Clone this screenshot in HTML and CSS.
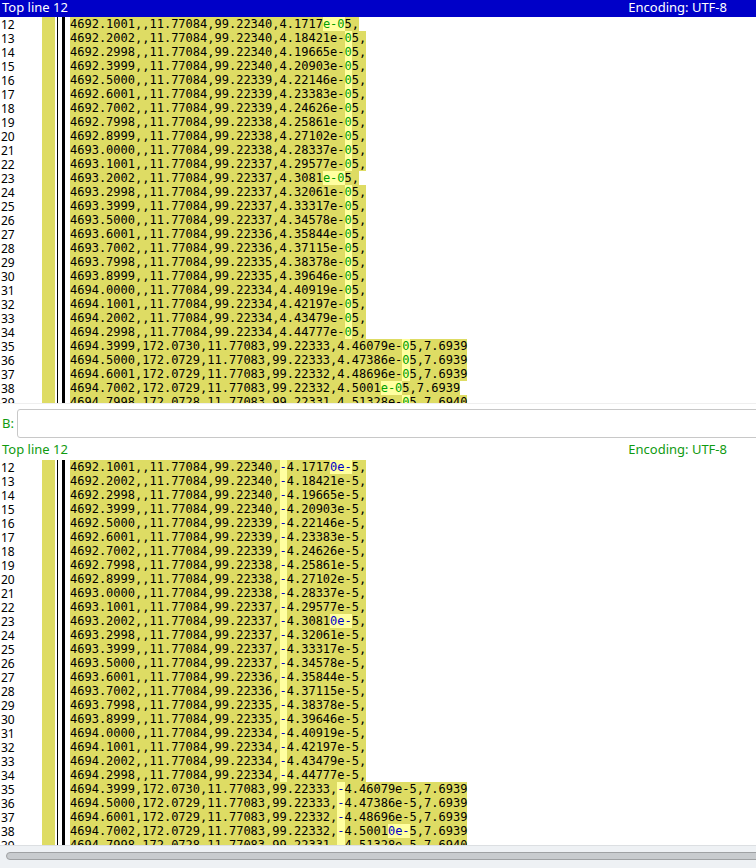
FILE: index.html
```html
<!DOCTYPE html>
<html lang="en">
<head>
<meta charset="utf-8">
<title>Diff</title>
<link rel="stylesheet" href="styles.css">
</head>
<body>
<div class="app">
  <section class="pane pane-a">
    <header class="head head-active"><span>Top line 12</span><span>Encoding: UTF-8</span></header>
    <div class="rows">
      <div class="row"><span class="num">12</span><span class="mark"></span><span class="bars"></span><code class="line">4692.1001,,11.77084,99.22340,4.1717<b class="ha">e-0</b>5,</code></div>
      <div class="row"><span class="num">13</span><span class="mark"></span><span class="bars"></span><code class="line">4692.2002,,11.77084,99.22340,4.18421e-<b class="ha">0</b>5,</code></div>
      <div class="row"><span class="num">14</span><span class="mark"></span><span class="bars"></span><code class="line">4692.2998,,11.77084,99.22340,4.19665e-<b class="ha">0</b>5,</code></div>
      <div class="row"><span class="num">15</span><span class="mark"></span><span class="bars"></span><code class="line">4692.3999,,11.77084,99.22340,4.20903e-<b class="ha">0</b>5,</code></div>
      <div class="row"><span class="num">16</span><span class="mark"></span><span class="bars"></span><code class="line">4692.5000,,11.77084,99.22339,4.22146e-<b class="ha">0</b>5,</code></div>
      <div class="row"><span class="num">17</span><span class="mark"></span><span class="bars"></span><code class="line">4692.6001,,11.77084,99.22339,4.23383e-<b class="ha">0</b>5,</code></div>
      <div class="row"><span class="num">18</span><span class="mark"></span><span class="bars"></span><code class="line">4692.7002,,11.77084,99.22339,4.24626e-<b class="ha">0</b>5,</code></div>
      <div class="row"><span class="num">19</span><span class="mark"></span><span class="bars"></span><code class="line">4692.7998,,11.77084,99.22338,4.25861e-<b class="ha">0</b>5,</code></div>
      <div class="row"><span class="num">20</span><span class="mark"></span><span class="bars"></span><code class="line">4692.8999,,11.77084,99.22338,4.27102e-<b class="ha">0</b>5,</code></div>
      <div class="row"><span class="num">21</span><span class="mark"></span><span class="bars"></span><code class="line">4693.0000,,11.77084,99.22338,4.28337e-<b class="ha">0</b>5,</code></div>
      <div class="row"><span class="num">22</span><span class="mark"></span><span class="bars"></span><code class="line">4693.1001,,11.77084,99.22337,4.29577e-<b class="ha">0</b>5,</code></div>
      <div class="row"><span class="num">23</span><span class="mark"></span><span class="bars"></span><code class="line">4693.2002,,11.77084,99.22337,4.3081<b class="ha">e-0</b>5,</code></div>
      <div class="row"><span class="num">24</span><span class="mark"></span><span class="bars"></span><code class="line">4693.2998,,11.77084,99.22337,4.32061e-<b class="ha">0</b>5,</code></div>
      <div class="row"><span class="num">25</span><span class="mark"></span><span class="bars"></span><code class="line">4693.3999,,11.77084,99.22337,4.33317e-<b class="ha">0</b>5,</code></div>
      <div class="row"><span class="num">26</span><span class="mark"></span><span class="bars"></span><code class="line">4693.5000,,11.77084,99.22337,4.34578e-<b class="ha">0</b>5,</code></div>
      <div class="row"><span class="num">27</span><span class="mark"></span><span class="bars"></span><code class="line">4693.6001,,11.77084,99.22336,4.35844e-<b class="ha">0</b>5,</code></div>
      <div class="row"><span class="num">28</span><span class="mark"></span><span class="bars"></span><code class="line">4693.7002,,11.77084,99.22336,4.37115e-<b class="ha">0</b>5,</code></div>
      <div class="row"><span class="num">29</span><span class="mark"></span><span class="bars"></span><code class="line">4693.7998,,11.77084,99.22335,4.38378e-<b class="ha">0</b>5,</code></div>
      <div class="row"><span class="num">30</span><span class="mark"></span><span class="bars"></span><code class="line">4693.8999,,11.77084,99.22335,4.39646e-<b class="ha">0</b>5,</code></div>
      <div class="row"><span class="num">31</span><span class="mark"></span><span class="bars"></span><code class="line">4694.0000,,11.77084,99.22334,4.40919e-<b class="ha">0</b>5,</code></div>
      <div class="row"><span class="num">32</span><span class="mark"></span><span class="bars"></span><code class="line">4694.1001,,11.77084,99.22334,4.42197e-<b class="ha">0</b>5,</code></div>
      <div class="row"><span class="num">33</span><span class="mark"></span><span class="bars"></span><code class="line">4694.2002,,11.77084,99.22334,4.43479e-<b class="ha">0</b>5,</code></div>
      <div class="row"><span class="num">34</span><span class="mark"></span><span class="bars"></span><code class="line">4694.2998,,11.77084,99.22334,4.44777e-<b class="ha">0</b>5,</code></div>
      <div class="row"><span class="num">35</span><span class="mark"></span><span class="bars"></span><code class="line">4694.3999,172.0730,11.77083,99.22333,4.46079e-<b class="ha">0</b>5,7.6939</code></div>
      <div class="row"><span class="num">36</span><span class="mark"></span><span class="bars"></span><code class="line">4694.5000,172.0729,11.77083,99.22333,4.47386e-<b class="ha">0</b>5,7.6939</code></div>
      <div class="row"><span class="num">37</span><span class="mark"></span><span class="bars"></span><code class="line">4694.6001,172.0729,11.77083,99.22332,4.48696e-<b class="ha">0</b>5,7.6939</code></div>
      <div class="row"><span class="num">38</span><span class="mark"></span><span class="bars"></span><code class="line">4694.7002,172.0729,11.77083,99.22332,4.5001<b class="ha">e-0</b>5,7.6939</code></div>
      <div class="row"><span class="num">39</span><span class="mark"></span><span class="bars"></span><code class="line">4694.7998,172.0728,11.77083,99.22331,4.51328e-<b class="ha">0</b>5,7.6940</code></div>
    </div>
  </section>

  <div class="file-row">
    <label class="file-label" for="file-b">B:</label>
    <input class="file-input" id="file-b" type="text">
  </div>

  <section class="pane pane-b">
    <header class="head head-idle"><span>Top line 12</span><span>Encoding: UTF-8</span></header>
    <div class="rows">
      <div class="row"><span class="num">12</span><span class="mark"></span><span class="bars"></span><code class="line">4692.1001,,11.77084,99.22340,<b class="hb">-</b>4.1717<b class="hb">0e-</b>5,</code></div>
      <div class="row"><span class="num">13</span><span class="mark"></span><span class="bars"></span><code class="line">4692.2002,,11.77084,99.22340,<b class="hb">-</b>4.18421e-5,</code></div>
      <div class="row"><span class="num">14</span><span class="mark"></span><span class="bars"></span><code class="line">4692.2998,,11.77084,99.22340,<b class="hb">-</b>4.19665e-5,</code></div>
      <div class="row"><span class="num">15</span><span class="mark"></span><span class="bars"></span><code class="line">4692.3999,,11.77084,99.22340,<b class="hb">-</b>4.20903e-5,</code></div>
      <div class="row"><span class="num">16</span><span class="mark"></span><span class="bars"></span><code class="line">4692.5000,,11.77084,99.22339,<b class="hb">-</b>4.22146e-5,</code></div>
      <div class="row"><span class="num">17</span><span class="mark"></span><span class="bars"></span><code class="line">4692.6001,,11.77084,99.22339,<b class="hb">-</b>4.23383e-5,</code></div>
      <div class="row"><span class="num">18</span><span class="mark"></span><span class="bars"></span><code class="line">4692.7002,,11.77084,99.22339,<b class="hb">-</b>4.24626e-5,</code></div>
      <div class="row"><span class="num">19</span><span class="mark"></span><span class="bars"></span><code class="line">4692.7998,,11.77084,99.22338,<b class="hb">-</b>4.25861e-5,</code></div>
      <div class="row"><span class="num">20</span><span class="mark"></span><span class="bars"></span><code class="line">4692.8999,,11.77084,99.22338,<b class="hb">-</b>4.27102e-5,</code></div>
      <div class="row"><span class="num">21</span><span class="mark"></span><span class="bars"></span><code class="line">4693.0000,,11.77084,99.22338,<b class="hb">-</b>4.28337e-5,</code></div>
      <div class="row"><span class="num">22</span><span class="mark"></span><span class="bars"></span><code class="line">4693.1001,,11.77084,99.22337,<b class="hb">-</b>4.29577e-5,</code></div>
      <div class="row"><span class="num">23</span><span class="mark"></span><span class="bars"></span><code class="line">4693.2002,,11.77084,99.22337,<b class="hb">-</b>4.3081<b class="hb">0e-</b>5,</code></div>
      <div class="row"><span class="num">24</span><span class="mark"></span><span class="bars"></span><code class="line">4693.2998,,11.77084,99.22337,<b class="hb">-</b>4.32061e-5,</code></div>
      <div class="row"><span class="num">25</span><span class="mark"></span><span class="bars"></span><code class="line">4693.3999,,11.77084,99.22337,<b class="hb">-</b>4.33317e-5,</code></div>
      <div class="row"><span class="num">26</span><span class="mark"></span><span class="bars"></span><code class="line">4693.5000,,11.77084,99.22337,<b class="hb">-</b>4.34578e-5,</code></div>
      <div class="row"><span class="num">27</span><span class="mark"></span><span class="bars"></span><code class="line">4693.6001,,11.77084,99.22336,<b class="hb">-</b>4.35844e-5,</code></div>
      <div class="row"><span class="num">28</span><span class="mark"></span><span class="bars"></span><code class="line">4693.7002,,11.77084,99.22336,<b class="hb">-</b>4.37115e-5,</code></div>
      <div class="row"><span class="num">29</span><span class="mark"></span><span class="bars"></span><code class="line">4693.7998,,11.77084,99.22335,<b class="hb">-</b>4.38378e-5,</code></div>
      <div class="row"><span class="num">30</span><span class="mark"></span><span class="bars"></span><code class="line">4693.8999,,11.77084,99.22335,<b class="hb">-</b>4.39646e-5,</code></div>
      <div class="row"><span class="num">31</span><span class="mark"></span><span class="bars"></span><code class="line">4694.0000,,11.77084,99.22334,<b class="hb">-</b>4.40919e-5,</code></div>
      <div class="row"><span class="num">32</span><span class="mark"></span><span class="bars"></span><code class="line">4694.1001,,11.77084,99.22334,<b class="hb">-</b>4.42197e-5,</code></div>
      <div class="row"><span class="num">33</span><span class="mark"></span><span class="bars"></span><code class="line">4694.2002,,11.77084,99.22334,<b class="hb">-</b>4.43479e-5,</code></div>
      <div class="row"><span class="num">34</span><span class="mark"></span><span class="bars"></span><code class="line">4694.2998,,11.77084,99.22334,<b class="hb">-</b>4.44777e-5,</code></div>
      <div class="row"><span class="num">35</span><span class="mark"></span><span class="bars"></span><code class="line">4694.3999,172.0730,11.77083,99.22333,<b class="hb">-</b>4.46079e-5,7.6939</code></div>
      <div class="row"><span class="num">36</span><span class="mark"></span><span class="bars"></span><code class="line">4694.5000,172.0729,11.77083,99.22333,<b class="hb">-</b>4.47386e-5,7.6939</code></div>
      <div class="row"><span class="num">37</span><span class="mark"></span><span class="bars"></span><code class="line">4694.6001,172.0729,11.77083,99.22332,<b class="hb">-</b>4.48696e-5,7.6939</code></div>
      <div class="row"><span class="num">38</span><span class="mark"></span><span class="bars"></span><code class="line">4694.7002,172.0729,11.77083,99.22332,<b class="hb">-</b>4.5001<b class="hb">0e-</b>5,7.6939</code></div>
      <div class="row"><span class="num">39</span><span class="mark"></span><span class="bars"></span><code class="line">4694.7998,172.0728,11.77083,99.22331,<b class="hb">-</b>4.51328e-5,7.6940</code></div>
    </div>
  </section>

  <div class="hscroll"><div class="hscroll-thumb"></div></div>
</div>
</body>
</html>
```
FILE: styles.css
```css
html, body {
  margin: 0;
  padding: 0;
  height: 100%;
  overflow: hidden;
  background: #fff;
}
.app {
  width: 756px;
  height: 868px;
  display: flex;
  flex-direction: column;
  overflow: hidden;
  font-family: "Noto Sans", sans-serif;
  font-size: 13px;
}
.pane { display: flex; flex-direction: column; overflow: hidden; flex: none; height: 403px; }
.head {
  flex: none;
  display: flex;
  justify-content: space-between;
  padding: 0 29px 0 2px;
  line-height: 15px;
  white-space: nowrap;
  box-sizing: border-box;
}
.head-active { height: 17px; background: #0000c8; color: #fff; }
.head-idle { height: 18px; background: #fff; color: #109a10; }
.rows { flex: 1; overflow: hidden; }
.row {
  height: 14px;
  display: flex;
  align-items: stretch;
  white-space: nowrap;
}
.num {
  width: 41px;
  padding: 1px 0 0 1px;
  box-sizing: content-box;
  height: 13px;
  flex: none;
  font-size: 12px;
  line-height: 14px;
  color: #000;
}
.mark { width: 13px; flex: none; background: #dedc64; }
.bars {
  width: 13px;
  flex: none;
  box-sizing: border-box;
  margin-left: 2px;
  border-left: 1px solid #000;
  background: linear-gradient(#000, #000) 4px 0 / 3px 100% no-repeat;
}
.line {
  display: block;
  font-family: "DejaVu Sans Mono", monospace;
  font-size: 12px;
  line-height: 14px;
  background: #dedc64;
  color: #000;
}
.line b { font-weight: normal; display: inline-block; }
.ha { background: #ffffa0; color: #00a000; }
.hb { background: #ffffa0; color: #0000c8; }
.file-row {
  height: 39px;
  flex: none;
  box-sizing: border-box;
  padding: 5px 0 4px 2px;
  display: flex;
  align-items: stretch;
  gap: 2px;
  border-top: 1px solid #efefef;
}
.file-label {
  color: #109a10;
  width: 13px;
  flex: none;
  line-height: 29px;
}
.file-input {
  flex: none;
  width: 780px;
  box-sizing: border-box;
  border: 1px solid #c8c8c8;
  border-radius: 3px;
  background: #fff;
  outline: none;
}
.hscroll {
  flex: 1;
  box-sizing: border-box;
  background: #eef1f4;
  border-top: 1px solid #dcdfe2;
  padding: 6px 0 0 6px;
}
.hscroll-thumb {
  width: 800px;
  height: 8px;
  box-sizing: border-box;
  background: #c8cbce;
  border: 1px solid #9fa1a3;
  border-radius: 4px;
}
```
